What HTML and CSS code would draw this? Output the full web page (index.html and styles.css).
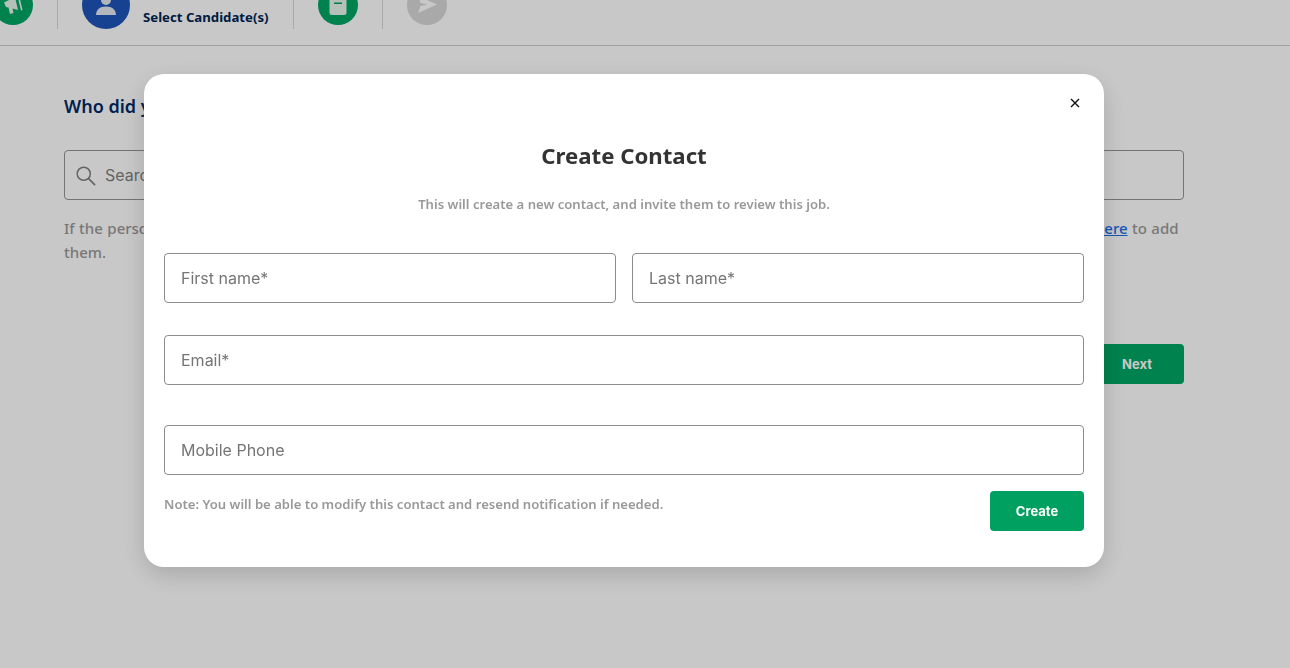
FILE: index.html
```html
<!DOCTYPE html>
<html lang="en">
<head>
<meta charset="utf-8">
<title>Create Contact</title>
<link rel="stylesheet" href="styles.css">
</head>
<body>
<header class="steps">
  <div class="step step-first">
    <span class="circle green">
      <svg viewBox="0 0 24 24" class="icon"><path d="M3 9.500l11-5.500 3 13-5.500-1.500 1 4.500-3.500 1-1.500-6.500-2.500-.5z" fill="#e9f5ee"/><path d="M17 5l1.500-1 3 13-1.500 .5z" fill="#e9f5ee"/></svg>
    </span>
  </div>
  <div class="step step-active">
    <span class="circle blue">
      <svg viewBox="0 0 24 24" class="icon icon-person"><circle cx="12" cy="7.400" r="4.600" fill="#e6e9f3"/><path d="M2.800 21.300c0-5 3.500-7.900 9.200-7.900s9.200 2.900 9.200 7.900z" fill="#e6e9f3"/></svg>
    </span>
    <span class="step-label">Select Candidate(s)</span>
  </div>
  <div class="step step-doc">
    <span class="circle green">
      <svg viewBox="0 0 24 24" class="icon"><rect x="3.500" y="2" width="17" height="20" rx="2.500" fill="#e9f5ee"/><rect x="8" y="9.500" width="8" height="1.500" fill="#00a160"/></svg>
    </span>
  </div>
  <div class="step step-send">
    <span class="circle grey">
      <svg viewBox="0 0 24 24" class="icon"><path d="M3 3l19 8.500-19 8.500 2.500-7 7-1.500-7-1.500z" fill="#fff"/></svg>
    </span>
  </div>
</header>

<main class="page">
  <h2 class="question">Who did you present this job to?</h2>
  <div class="search">
    <svg viewBox="0 0 24 24" class="search-icon"><circle cx="10" cy="10" r="7.500" fill="none" stroke="#808080" stroke-width="1.700"/><path d="M15.500 15.500L23 23" stroke="#808080" stroke-width="1.900" fill="none"/></svg>
    <span class="search-text">Search</span>
  </div>
  <p class="hint">If the person you are looking for is not listed in the search results above, they may not yet be saved as a contact in our system, so please click <a href="#" class="hint-link">here</a> to add them.</p>
  <div class="page-actions"><button class="next">Next</button></div>
</main>

<div class="overlay">
  <section class="modal">
    <div class="close-row">
      <svg viewBox="0 0 10 10" class="close"><path d="M1 1l8 8M9 1l-8 8" stroke="#111" stroke-width="1.400" fill="none"/></svg>
    </div>
    <h1 class="modal-title">Create Contact</h1>
    <p class="modal-sub">This will create a new contact, and invite them to review this job.</p>
    <div class="row-two">
      <input class="field" placeholder="First name*">
      <input class="field" placeholder="Last name*">
    </div>
    <input class="field field-email" placeholder="Email*">
    <input class="field field-phone" placeholder="Mobile Phone">
    <div class="modal-foot">
      <p class="note">Note: You will be able to modify this contact and resend notification if needed.</p>
      <button class="create">Create</button>
    </div>
  </section>
</div>
</body>
</html>
```
FILE: styles.css
```css
* { box-sizing: border-box; }
html, body { margin: 0; height: 100%; overflow: hidden; }
body { background: #fff; font-family: "Noto Sans", sans-serif; color: #002554; }

.steps {
  height: 46px;
  border-bottom: 1px solid #cfcfcf;
  display: flex;
  align-items: flex-start;
  overflow: hidden;
}
.step { height: 29px; display: flex; align-items: flex-end; border-right: 1px solid #d9d9d9; }
.step-first { width: 58px; padding-bottom: 4px; }
.step-first .circle { margin-left: -7px; }
.step-active { width: 236px; padding-left: 24px; }
.step-doc { width: 89px; padding-left: 24px; padding-bottom: 4px; }
.step-send { padding-left: 24px; padding-bottom: 4px; border-right: 0; }

.circle {
  width: 40px; height: 40px; border-radius: 50%;
  display: flex; align-items: center; justify-content: center; flex: none;
}
.green { background: #00a665; }
.grey { background: #d8d8d8; }
.blue { background: #1e55bb; width: 48px; height: 48px; }
.icon { width: 24px; height: 24px; }
.icon-person { width: 26px; height: 26px; }
.step-label {
  margin-left: 13px; font-size: 13.2px; font-weight: 700; line-height: 18px;
  margin-bottom: 3px; white-space: nowrap; color: #002554;
}

.page { padding: 47px 106px 0 64px; }
.question { margin: 0; font-size: 18px; font-weight: 600; line-height: 26px; color: #002a66; }
.search {
  margin-top: 31px; height: 50px; border: 1px solid #949494; border-radius: 4px;
  display: flex; align-items: center; padding-left: 10px;
}
.search-icon { width: 21px; height: 21px; }
.search-text { margin-left: 9px; font-family: Inter, sans-serif; font-size: 16px; color: #808080; }
.hint { margin: 16px 0 0; font-size: 15px; font-weight: 500; line-height: 24px; color: #999; word-spacing: 0.55px; }
.hint-link { color: #1a6fe8; }
.page-actions { margin-top: 80px; display: flex; justify-content: flex-end; }
.next {
  width: 94px; height: 40px; border: 0; border-radius: 4px; background: #00a665;
  color: #fff; font-family: Inter, sans-serif; font-weight: 700; font-size: 13px;
}

.overlay {
  position: fixed; inset: 0; background: rgba(0, 0, 0, 0.216);
  display: flex; justify-content: center; align-items: flex-start; padding: 74px 42px 0 0;
}
.modal {
  width: 960px; height: 493px; background: #fff; border-radius: 20px;
  padding: 20px; box-shadow: 0 8px 24px rgba(0, 0, 0, 0.16);
  display: flex; flex-direction: column;
}
.close-row { display: flex; justify-content: flex-end; height: 20px; padding: 4px 4px 0 0; }
.close { width: 10px; height: 10px; }
.modal-title {
  margin: 25px 0 0; text-align: center; font-size: 22.2px; font-weight: 700;
  line-height: 34px; color: #333;
}
.modal-sub {
  margin: 22px 0 0; text-align: center; font-size: 13.1px; font-weight: 600;
  line-height: 18px; color: #999;
}
.row-two { display: flex; gap: 16px; margin-top: 40px; }
.field {
  display: block; width: 100%; height: 50px; border: 1px solid #8c8c8c; border-radius: 4px;
  padding: 0 16px; font-family: Inter, sans-serif; font-size: 16px; color: #333; outline: 0;
  min-width: 0;
}
.field::placeholder { color: #757575; opacity: 1; }
.field-email { margin-top: 32px; }
.field-phone { margin-top: 40px; }
.modal-foot { display: flex; justify-content: space-between; align-items: flex-start; margin-top: 16px; }
.note { margin: 4px 0 0; font-size: 13.1px; font-weight: 600; line-height: 18px; color: #999; }
.create {
  width: 94px; height: 40px; border: 0; border-radius: 4px; background: #00a160;
  color: #fff; font-family: Inter, sans-serif; font-weight: 700; font-size: 13px;
}
```
